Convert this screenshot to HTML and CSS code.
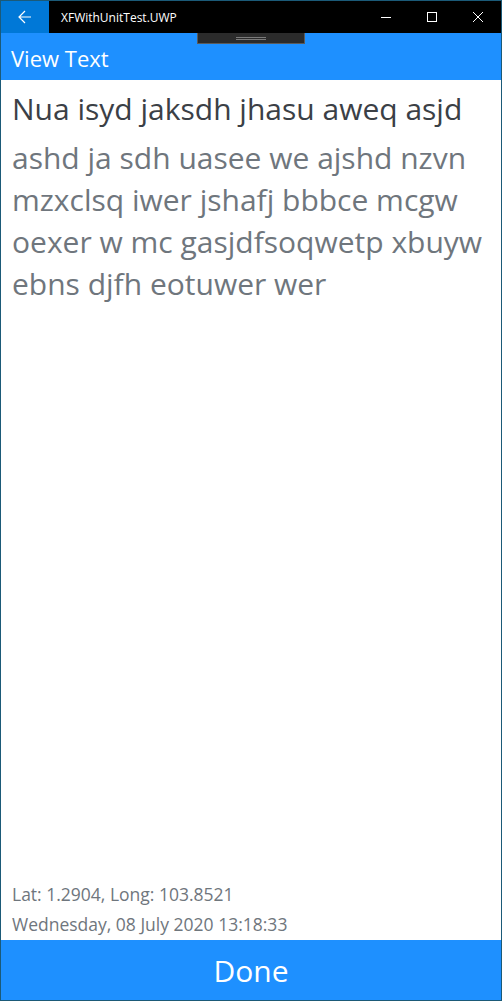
FILE: index.html
```html
<!DOCTYPE html>
<html>
<head>
<meta charset="utf-8">
<link rel="stylesheet" href="styles.css">
</head>
<body>
<div class="window">
  <div class="titlebar">
    <div class="back">
      <svg width="14" height="14" viewBox="0 0 14 14"><path d="M7 1 L1 7 L7 13 M1 7 H13" fill="none" stroke="#fff" stroke-width="1.2"/></svg>
    </div>
    <div class="title">XFWithUnitTest.UWP</div>
    <div class="controls">
      <div class="ctl"><svg width="10" height="10" viewBox="0 0 10 10"><path d="M0 5.5 H10" stroke="#fff" stroke-width="1"/></svg></div>
      <div class="ctl"><svg width="10" height="10" viewBox="0 0 10 10"><rect x="0.5" y="0.5" width="9" height="9" fill="none" stroke="#fff" stroke-width="1"/></svg></div>
      <div class="ctl"><svg width="10" height="10" viewBox="0 0 10 10"><path d="M0 0 L10 10 M10 0 L0 10" stroke="#fff" stroke-width="1"/></svg></div>
    </div>
  </div>
  <div class="appbar">
    <div class="handle"><span></span><span></span></div>
    <div class="apptitle">View Text</div>
  </div>
  <div class="content">
    <div class="heading">Nua isyd jaksdh jhasu aweq asjd</div>
    <div class="body">
      <span class="line">ashd ja sdh uasee we ajshd nzvn</span>
      <span class="line">mzxclsq iwer jshafj bbbce mcgw</span>
      <span class="line">oexer w mc gasjdfsoqwetp xbuyw</span>
      <span class="line">ebns djfh eotuwer wer</span>
    </div>
    <div class="spacer"></div>
    <div class="meta">Lat: 1.2904, Long: 103.8521</div>
    <div class="meta">Wednesday, 08 July 2020 13:18:33</div>
  </div>
  <div class="done">Done</div>
</div>
</body>
</html>
```
FILE: styles.css
```css
html, body {
  margin: 0;
  padding: 0;
  width: 502px;
  height: 1001px;
  overflow: hidden;
}
body {
  font-family: "Open Sans", "Noto Sans", sans-serif;
}
.window {
  box-sizing: border-box;
  width: 502px;
  height: 1001px;
  border: 1px solid #1b5a78;
  display: flex;
  flex-direction: column;
  background: #fff;
}
.titlebar {
  height: 32px;
  background: #000;
  display: flex;
  align-items: center;
  color: #fff;
}
.back {
  width: 48px;
  height: 32px;
  background: #0078d7;
  display: flex;
  align-items: center;
  justify-content: center;
}
.title {
  margin-left: 12px;
  font-size: 12px;
  flex: 1;
}
.controls {
  display: flex;
  height: 32px;
}
.ctl {
  width: 46px;
  display: flex;
  align-items: center;
  justify-content: center;
}
.appbar {
  position: relative;
  height: 47px;
  background: #1e90ff;
  display: flex;
  align-items: center;
}
.handle {
  position: absolute;
  left: 196px;
  top: 0;
  width: 106px;
  height: 10px;
  background: #2b2b2b;
  border: 1px solid #5a5a5a;
  border-top: none;
  display: flex;
  flex-direction: column;
  align-items: center;
  justify-content: center;
  gap: 1px;
}
.handle span {
  display: block;
  width: 30px;
  height: 1px;
  background: #7a7a7a;
}
.apptitle {
  margin-left: 10px;
  margin-top: 2px;
  color: #fff;
  font-size: 22px;
}
.content {
  flex: 1;
  display: flex;
  flex-direction: column;
  padding: 8px 11px 1px;
}
.heading {
  font-size: 30px;
  color: #3b4046;
  line-height: 42px;
  white-space: nowrap;
}
.body {
  margin-top: 7px;
  font-size: 30px;
  color: #6f767d;
  line-height: 42px;
}
.line {
  display: block;
  white-space: nowrap;
}
.spacer {
  flex: 1;
}
.meta {
  font-size: 17.5px;
  color: #6f767d;
  line-height: 30px;
}
.done {
  height: 60px;
  background: #1e90ff;
  color: #fff;
  font-size: 30px;
  display: flex;
  align-items: center;
  justify-content: center;
}
```
